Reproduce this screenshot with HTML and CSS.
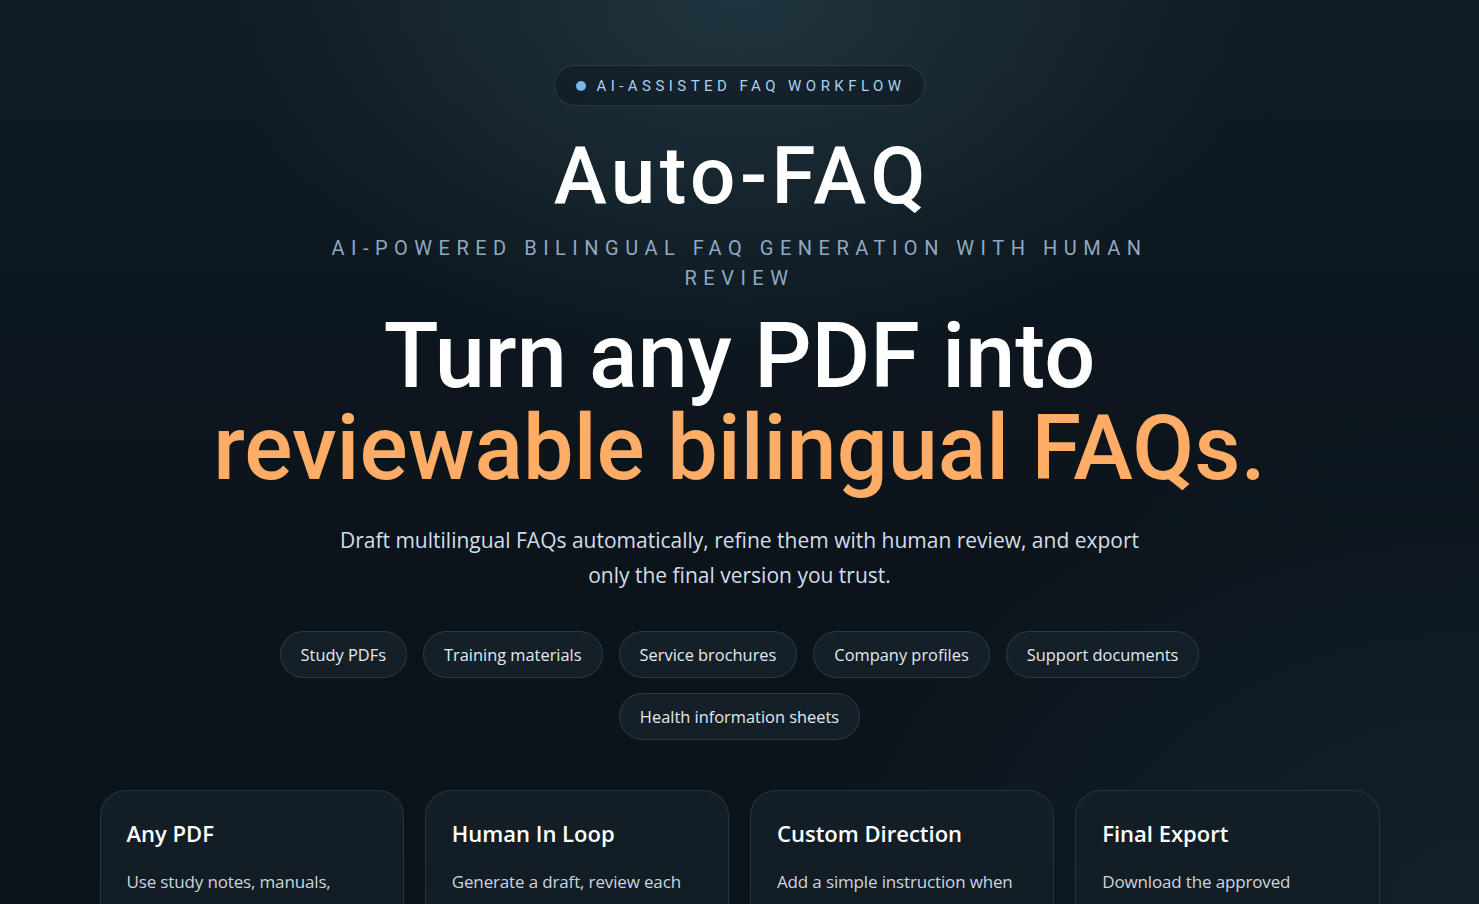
FILE: index.html
```html
<!DOCTYPE html>
<html lang="en">
<head>
<meta charset="utf-8">
<title>Auto-FAQ</title>
<link rel="stylesheet" href="styles.css">
</head>
<body>
<main class="page">
  <section class="hero">
    <div class="badge"><span class="badge-dot"></span><span class="badge-text">AI-Assisted FAQ Workflow</span></div>
    <h1 class="brand">Auto-FAQ</h1>
    <p class="tagline">AI-Powered Bilingual FAQ Generation With Human Review</p>
    <h2 class="headline"><span class="line-white">Turn any PDF into</span><span class="line-accent">reviewable bilingual FAQs.</span></h2>
    <p class="lead">Draft multilingual FAQs automatically, refine them with human review, and export only the final version you trust.</p>
    <ul class="chips">
      <li class="chip">Study PDFs</li>
      <li class="chip">Training materials</li>
      <li class="chip">Service brochures</li>
      <li class="chip">Company profiles</li>
      <li class="chip">Support documents</li>
      <li class="chip">Health information sheets</li>
    </ul>
  </section>
  <section class="features">
    <article class="card">
      <h3 class="card-title">Any PDF</h3>
      <p class="card-text">Use study notes, manuals, brochures, profiles and more.</p>
    </article>
    <article class="card">
      <h3 class="card-title">Human In Loop</h3>
      <p class="card-text">Generate a draft, review each answer, and approve it.</p>
    </article>
    <article class="card">
      <h3 class="card-title">Custom Direction</h3>
      <p class="card-text">Add a simple instruction when needed for tone.</p>
    </article>
    <article class="card">
      <h3 class="card-title">Final Export</h3>
      <p class="card-text">Download the approved bilingual FAQ file.</p>
    </article>
  </section>
</main>
</body>
</html>
```

FILE: styles.css
```css
* { box-sizing: border-box; }
html, body { margin: 0; padding: 0; }
body {
  height: 904px;
  background-color: #0c141b;
  background-image:
    radial-gradient(ellipse 520px 360px at 740px 0px, rgba(40, 66, 78, 0.65), rgba(40, 66, 78, 0) 100%),
    radial-gradient(ellipse 700px 500px at 1479px 904px, rgba(30, 44, 54, 0.5), rgba(30, 44, 54, 0) 100%),
    linear-gradient(180deg, #101b23 0%, #0c141b 60%, #0c141b 100%);
  color: #e8eef4;
  font-family: "Open Sans", "Noto Sans", sans-serif;
  overflow: hidden;
}
.page {
  display: flex;
  flex-direction: column;
  align-items: center;
  padding-top: 65px;
}
.hero {
  display: flex;
  flex-direction: column;
  align-items: center;
  width: 100%;
}
.badge {
  display: flex;
  align-items: center;
  gap: 10px;
  height: 41px;
  padding: 0 18px 0 21px;
  border: 1px solid rgba(160, 190, 210, 0.16);
  border-radius: 999px;
  background: rgba(10, 20, 28, 0.45);
}
.badge-dot {
  width: 10px;
  height: 10px;
  border-radius: 50%;
  background: #7ab6e8;
}
.badge-text {
  font-family: Roboto, sans-serif;
  font-size: 15px;
  letter-spacing: 4.45px;
  text-transform: uppercase;
  color: #a9d0f0;
}
.brand {
  margin: 30px 0 0;
  padding-left: 4.5px;
  font-family: Roboto, sans-serif;
  font-weight: 500;
  font-size: 80px;
  line-height: 80px;
  letter-spacing: 4.5px;
  color: #ffffff;
}
.tagline {
  margin: 17px 0 0;
  max-width: 830px;
  text-align: center;
  font-family: Roboto, sans-serif;
  font-size: 20px;
  line-height: 30px;
  letter-spacing: 6.5px;
  text-transform: uppercase;
  color: #8ea8c2;
}
.headline {
  margin: 18px 0 0;
  display: flex;
  flex-direction: column;
  align-items: center;
  font-family: Roboto, sans-serif;
  font-weight: 500;
  font-size: 90px;
  line-height: 92px;
  letter-spacing: 0px;
}
.line-white { color: #ffffff; }
.line-accent { color: #ffad66; }
.lead {
  margin: 28px 0 0;
  max-width: 830px;
  text-align: center;
  font-size: 21px;
  line-height: 35px;
  color: #d3dde8;
}
.chips {
  list-style: none;
  margin: 38px 0 0;
  padding: 0;
  display: flex;
  flex-wrap: wrap;
  justify-content: center;
  gap: 15px 16px;
  max-width: 1000px;
}
.chip {
  height: 47px;
  display: flex;
  align-items: center;
  padding: 0 20px;
  border: 1px solid rgba(160, 190, 210, 0.16);
  border-radius: 999px;
  background: #141f28;
  font-size: 16.4px;
  color: #e2e9f0;
}
.features {
  margin-top: 50px;
  width: 1280px;
  display: grid;
  grid-template-columns: repeat(4, 1fr);
  gap: 21px;
}
.card {
  height: 200px;
  padding: 26px 26px;
  border: 1px solid rgba(160, 190, 210, 0.14);
  border-radius: 26px;
  background: linear-gradient(180deg, #131e26 0%, #111b23 100%);
}
.card-title {
  margin: 0;
  font-size: 22px;
  line-height: 32px;
  font-weight: 600;
  color: #ffffff;
}
.card-text {
  margin: 19px 0 0;
  font-size: 17px;
  line-height: 28px;
  letter-spacing: -0.15px;
  color: #cbd5df;
}
```
